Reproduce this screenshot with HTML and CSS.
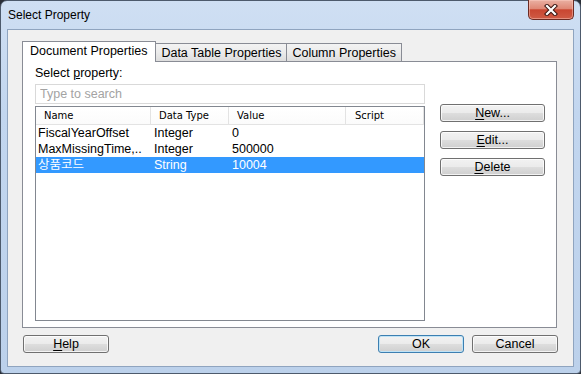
FILE: index.html
```html
<!DOCTYPE html>
<html>
<head>
  <title>Select Property</title>
  <link rel="stylesheet" href="styles.css">
</head>
<body>
  <div class="window">
    <div class="titlebar">
      <span class="title">Select Property</span>
      <button class="close-btn" aria-label="Close">
        <svg width="14" height="12" viewBox="0 0 14 12">
          <path d="M3 2 L11 10 M11 2 L3 10" stroke="#3c1510" stroke-width="4.2" stroke-linecap="square"/>
          <path d="M3 2 L11 10 M11 2 L3 10" stroke="#ffffff" stroke-width="2.2" stroke-linecap="square"/>
        </svg>
      </button>
    </div>

    <div class="client">
      <div class="tabs">
        <div class="tab tab-active">Document Properties</div>
        <div class="tab">Data Table Properties</div>
        <div class="tab">Column Properties</div>
      </div>

      <div class="tab-panel">
        <div class="left-col">
          <div class="field-label">Select <u>p</u>roperty:</div>
          <input type="text" class="search-box" placeholder="Type to search">
          <div class="prop-list">
            <div class="list-header">
              <div class="col-head">Name</div>
              <div class="col-head">Data Type</div>
              <div class="col-head">Value</div>
              <div class="col-head">Script</div>
            </div>
            <div class="list-row">
              <div class="cell cell-name">FiscalYearOffset</div>
              <div class="cell">Integer</div>
              <div class="cell">0</div>
              <div class="cell"></div>
            </div>
            <div class="list-row">
              <div class="cell cell-name">MaxMissingTime,..</div>
              <div class="cell">Integer</div>
              <div class="cell">500000</div>
              <div class="cell"></div>
            </div>
            <div class="list-row row-selected">
              <div class="cell cell-name">상품코드</div>
              <div class="cell">String</div>
              <div class="cell">10004</div>
              <div class="cell"></div>
            </div>
          </div>
        </div>

        <div class="side-buttons">
          <button class="win-btn"><u>N</u>ew...</button>
          <button class="win-btn"><u>E</u>dit...</button>
          <button class="win-btn"><u>D</u>elete</button>
        </div>
      </div>

      <div class="dialog-footer">
        <button class="win-btn footer-btn"><u>H</u>elp</button>
        <div class="footer-right">
          <button class="win-btn footer-btn default-btn">OK</button>
          <button class="win-btn footer-btn">Cancel</button>
        </div>
      </div>
    </div>
  </div>
</body>
</html>
```

FILE: styles.css
```css
:root {
  --frame-top: #cfdff3;
  --frame-bottom: #bcd1eb;
  --client-bg: #f0f0f0;
  --tab-border: #898c95;
  --list-border: #828790;
  --grid-line: #e3e3e3;
  --select-bg: #3399ff;
  --btn-border: #707070;
  --default-border: #3c7fb1;
}

body {
  margin: 0;
  width: 581px;
  height: 374px;
  overflow: hidden;
  background-color: #2a2f38;
  font-family: 'Liberation Sans', Arial, 'Noto Sans CJK KR', sans-serif;
  font-size: 12.5px;
  color: #000000;
}

.window {
  width: 581px;
  height: 374px;
  box-sizing: border-box;
  border: 1px solid #4d5a6c;
  border-radius: 7px 7px 4px 4px;
  padding: 0 6px 6px 6px;
  display: flex;
  flex-direction: column;
  background: linear-gradient(to bottom, var(--frame-top) 0%, #c2d6ef 30%, var(--frame-bottom) 100%);
}

/* Title bar */
.titlebar {
  height: 28px;
  flex-shrink: 0;
  display: flex;
  justify-content: space-between;
  align-items: flex-start;
}

.title {
  padding-left: 1px;
  line-height: 28px;
  font-size: 12px;
  color: #000000;
}

.close-btn {
  margin-top: -1px;
  width: 46px;
  height: 20px;
  padding: 0;
  display: flex;
  align-items: center;
  justify-content: center;
  border: 1px solid #6b2a22;
  border-top: none;
  border-radius: 0 0 5px 5px;
  background: linear-gradient(to bottom, #eab0a3 0%, #df8876 45%, #c94631 52%, #cf5b45 100%);
  box-shadow: inset 0 0 0 1px rgba(255, 210, 200, 0.45);
}

/* Client area */
.client {
  flex: 1;
  display: flex;
  flex-direction: column;
  background-color: var(--client-bg);
  border: 1px solid #8fa4bf;
  padding: 11px 16px 13px 14px;
}

.tabs {
  display: flex;
  align-items: flex-end;
  height: 20px;
  flex-shrink: 0;
}

.tab {
  height: 18px;
  box-sizing: border-box;
  padding: 1px 5px 0 5px;
  line-height: 16px;
  border: 1px solid var(--tab-border);
  border-bottom: none;
  margin-left: -1px;
  white-space: nowrap;
  background: linear-gradient(to bottom, #f3f3f3 0%, #ebebeb 50%, #dddddd 100%);
}

.tab-active {
  height: 21px;
  margin-left: 0;
  margin-bottom: -1px;
  padding: 0 8px 0 7px;
  line-height: 18px;
  background: #ffffff;
  position: relative;
  z-index: 1;
}

.tab-active + .tab {
  border-left: none;
  margin-left: 0;
}

.tab-panel {
  flex: 1;
  display: flex;
  border: 1px solid var(--tab-border);
  background-color: #ffffff;
  padding: 3px 11px 6px 12px;
}

.left-col {
  width: 390px;
  display: flex;
  flex-direction: column;
}

.field-label {
  line-height: 16px;
  margin-bottom: 3px;
}

.search-box {
  height: 20px;
  box-sizing: border-box;
  margin: 0 0 2px 0;
  padding: 0 4px;
  border: 1px solid #d9d9d9;
  font-family: inherit;
  font-size: 12.5px;
  outline: none;
}

.search-box::placeholder {
  color: #a3a3a3;
}

/* Property list */
.prop-list {
  flex: 1;
  border: 1px solid var(--list-border);
  background-color: #ffffff;
}

.list-header,
.list-row {
  display: grid;
  grid-template-columns: 115px 78px 117px 78px;
}

.list-header {
  height: 17px;
  border-bottom: 1px solid var(--grid-line);
  font-family: 'DejaVu Sans', Tahoma, sans-serif;
  font-size: 10px;
  line-height: 17px;
  background: linear-gradient(to bottom, #ffffff 0%, #fbfbfb 100%);
}

.col-head {
  padding-left: 8px;
  border-right: 1px solid var(--grid-line);
}

.col-head:last-child {
  padding-left: 9px;
}

.list-row {
  height: 16px;
  line-height: 16px;
}

.cell {
  padding-left: 3px;
  white-space: nowrap;
  overflow: hidden;
}

.cell-name {
  padding-left: 2px;
}

.row-selected {
  background-color: var(--select-bg);
  color: #ffffff;
}

/* Buttons */
.side-buttons {
  margin-left: 15px;
  padding-top: 39px;
  display: flex;
  flex-direction: column;
  gap: 9px;
}

.win-btn {
  width: 105px;
  height: 18px;
  padding: 0;
  border: 1px solid var(--btn-border);
  border-radius: 3px;
  font-family: inherit;
  font-size: 12.5px;
  line-height: 15px;
  color: #000000;
  text-align: center;
  background: linear-gradient(to bottom, #f2f2f2 0%, #ebebeb 48%, #dddddd 52%, #cfcfcf 100%);
  box-shadow: inset 0 0 0 1px rgba(255, 255, 255, 0.75);
}

.win-btn u {
  text-underline-offset: 2px;
}

.dialog-footer {
  display: flex;
  justify-content: space-between;
  margin: 7px -1px 0 1px;
}

.footer-right {
  display: flex;
  gap: 8px;
}

.footer-btn {
  width: 86px;
}

.default-btn {
  border-color: var(--default-border);
  box-shadow: inset 0 0 0 1px #bfe3f6;
}
```
